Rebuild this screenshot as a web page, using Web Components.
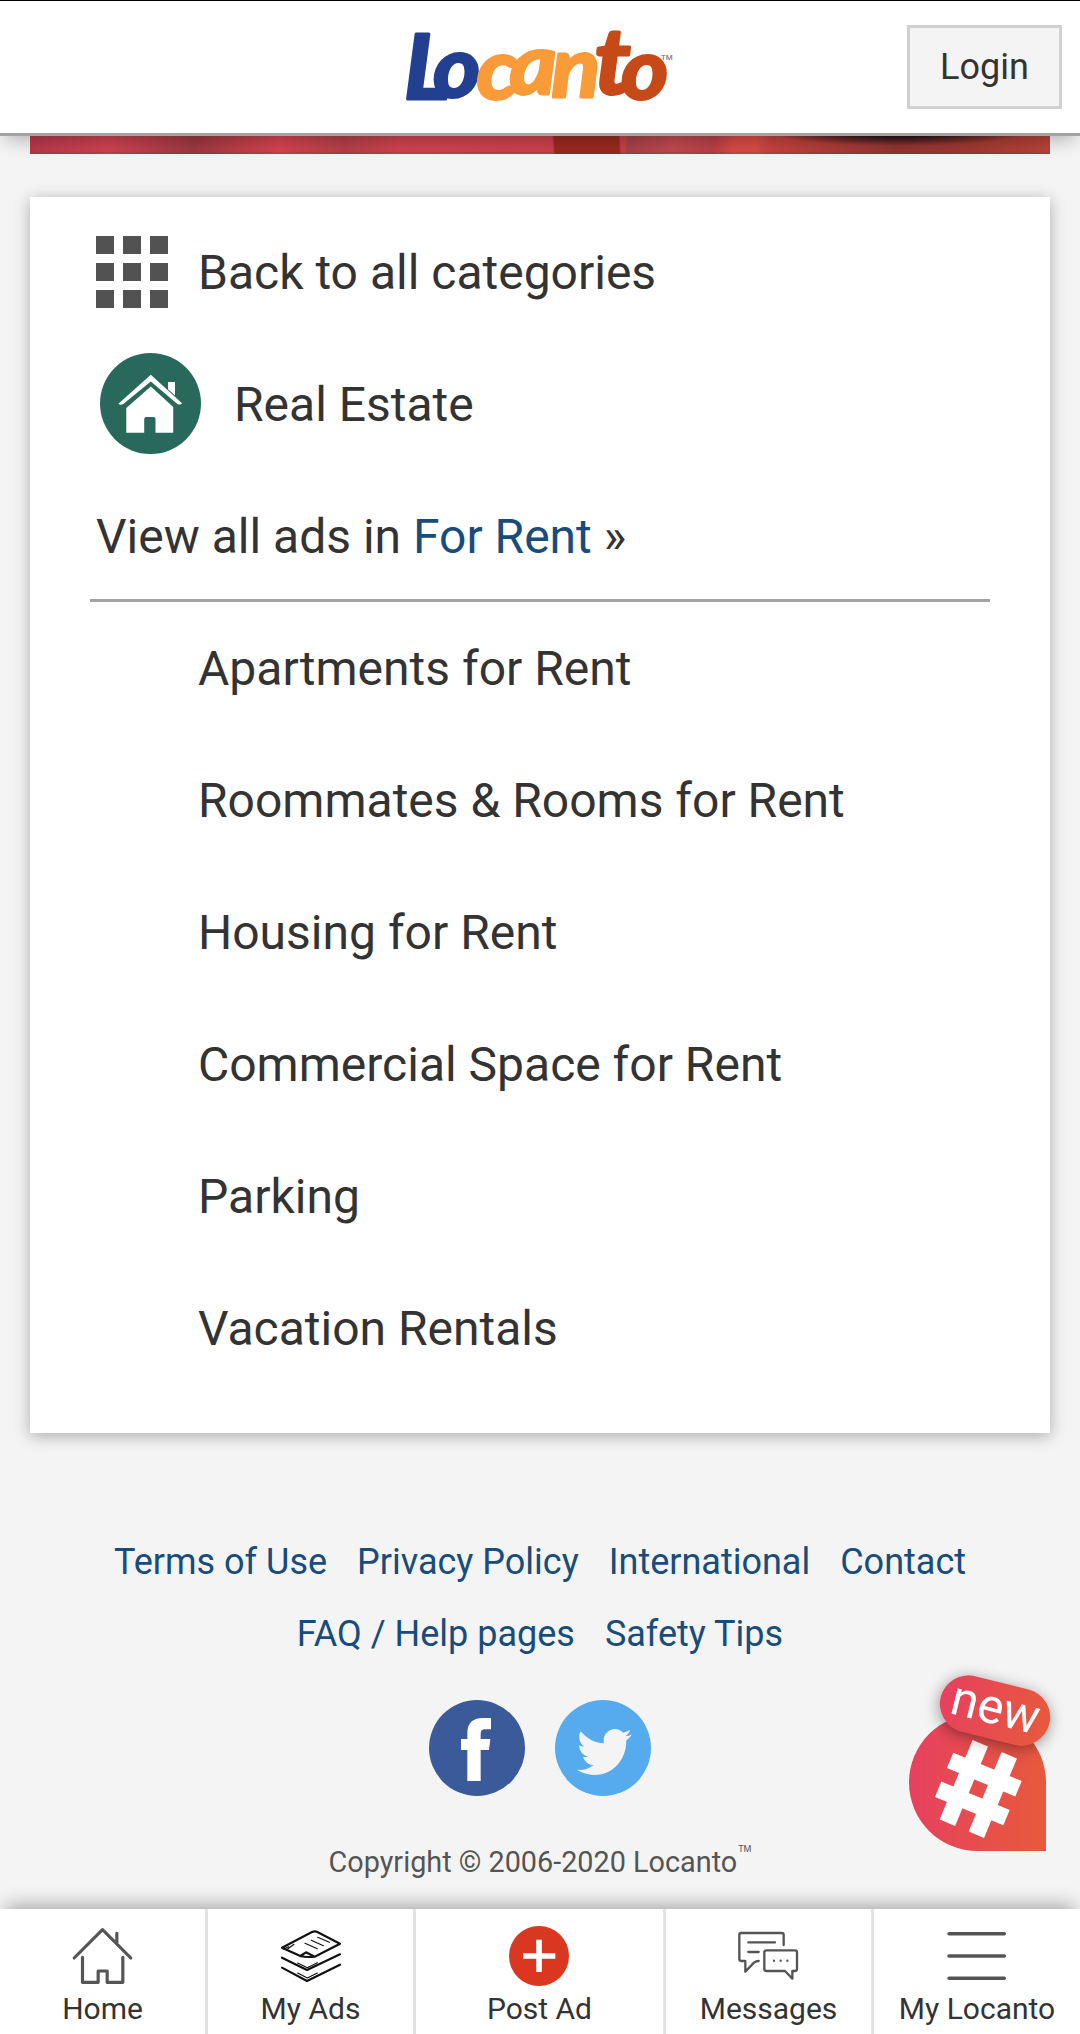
<!DOCTYPE html>
<html lang="en">
<head>
<meta charset="utf-8">
<title>Locanto - For Rent</title>
<style>
html,body{margin:0;padding:0;background:#f4f4f4}
body{font-family:Roboto,"Liberation Sans",sans-serif;color:#333}
</style>
</head>
<body>
<locanto-page></locanto-page>
<script>
const define=(name,css,html)=>customElements.define(name,class extends HTMLElement{
  constructor(){
    super();
    const t=document.createElement('template');
    t.innerHTML=`<style>*{box-sizing:border-box}${css}</style>${html}`;
    this.attachShadow({mode:'open'}).append(t.content.cloneNode(true));
  }
});

define('locanto-logo',`:host{display:block;width:270px;height:76px}svg{display:block;overflow:visible}
text{font-family:Lato,"Liberation Sans",sans-serif;font-weight:700;font-style:italic;font-size:84px;stroke-linejoin:round;stroke-width:3}
.b{fill:#22408f;stroke:#22408f}.y{fill:#f99b38;stroke:#f99b38}.r{fill:#c64a17;stroke:#c64a17}.L{font-size:90px}.t{font-size:92px}.tm{font:400 8px Roboto,sans-serif;fill:#666;stroke:none}`,
`<svg width="270" height="76" viewBox="405 28 270 76" role="img" aria-label="Locanto">
<text transform="translate(405 0) scale(1.07 1)"><tspan class="b L" x="-1" y="99">L</tspan><tspan class="b" x="26.500" y="97">o</tspan><tspan class="y" x="67 98 137" y="99.500 94 97.500">can</tspan><tspan class="r t" x="177" y="94.500">t</tspan><tspan class="r" x="202" y="99.500">o</tspan></text>
<text class="tm" x="661" y="60">TM</text></svg>`);

define('login-button',`:host{display:flex;width:155px;height:84px;border:3px solid #d0d0d0;background:#f4f4f4;align-items:center;justify-content:center;font-size:36px;line-height:42px;color:#333}`,`<slot></slot>`);

define('site-header',`:host{display:grid;grid-template-columns:1fr 270px 1fr;align-items:start;height:136px;flex:none;background:#fff;border-top:1px solid #000;border-bottom:3px solid #a3a1a1;box-shadow:0 9px 18px -6px rgba(0,0,0,.3);position:relative;z-index:2}
locanto-logo{margin-top:27px}login-button{justify-self:end;margin:24px 18px 0 0}`,
`<span></span><locanto-logo></locanto-logo><login-button><slot></slot></login-button>`);

define('hero-strip',`:host{display:block;flex:none;height:18px;margin:0 30px;background:
linear-gradient(#0000 82%,#602a4444),
radial-gradient(ellipse 125px 13px at 868px -3px,#2b1618 30%,#2b161800),
linear-gradient(97deg,#0000 592px,#a84048 594px,#c04a50 640px,#b84048 680px,#d84b46 700px 722px,#0000 735px),
linear-gradient(86deg,#0000 522px,#9c291f 524px 588px,#0000 590px),
linear-gradient(90deg,#b9384b 0,#cf4251 80px,#9f3841 165px,#d6444e 250px,#b53f49 315px,#d1434d 370px,#cc414c 525px,#c04448 590px,#d04642 715px,#b23c38 790px,#943531 865px,#a03832 940px,#b8443a 1020px)}`,``);

define('grid-icon',`:host{display:grid;grid-template-columns:repeat(3,18px);gap:9px;flex:none}i{height:18px;background:#525252}`,'<i></i>'.repeat(9));

define('estate-icon',`:host{display:block;flex:none;width:101px;height:101px}svg{display:block}`,
`<svg width="101" height="101" viewBox="0 0 101 101"><circle cx="50.5" cy="50.5" r="50.5" fill="#29695c"/>
<path fill="#fff" d="M50.8 21.8 82 50.3q-1 1.7-4.3 1L50.8 28.5 23 51.3q-3.300 1-4.600-.6ZM68 29h7v13.500l-7-6.300ZM50.800 33.500 73.200 54v25.700H55.500V66q0-2-2-2h-7.300q-2 0-2 2v13.700H26.300V55Z"/></svg>`);

define('category-row',`:host{display:flex;align-items:center;height:132px;padding-left:66px;gap:30px;font-size:48px;line-height:56px;white-space:pre}
span{padding-top:2px}
:host([sub]){padding-left:168px}
:host([estate]){padding:0 0 1px 69.500px;gap:33.500px}
:host([estate]) span{padding-top:3px}
:host([ruled]){gap:0;margin:0 60px;padding-left:6px;border-bottom:3px solid #a3a3a3;padding-top:3px}`,`<slot name="icon"></slot><span><slot></slot></span>`);

define('category-card',`:host{display:block;flex:none;height:1236px;margin:43px 30px 0;padding-top:9px;background:#fff;box-shadow:0 3px 15px rgba(0,0,0,.3)}a{color:#174c7c}`,
`<category-row><grid-icon slot="icon"></grid-icon>Back to all categories</category-row>
<category-row estate><estate-icon slot="icon"></estate-icon>Real Estate</category-row>
<category-row ruled>View all ads in <a>For Rent</a> »</category-row>
<category-row sub>Apartments for Rent</category-row>
<category-row sub>Roommates &amp; Rooms for Rent</category-row>
<category-row sub>Housing for Rent</category-row>
<category-row sub>Commercial Space for Rent</category-row>
<category-row sub>Parking</category-row>
<category-row sub>Vacation Rentals</category-row>`);

define('footer-links',`:host{display:flex;flex-direction:column;font-size:36px;line-height:72px;color:#174c7c}div{display:flex;justify-content:center;gap:30px}`,
`<div><a>Terms of Use</a><a>Privacy Policy</a><a>International</a><a>Contact</a></div><div><a>FAQ / Help pages</a><a>Safety Tips</a></div>`);

define('social-links',`:host{display:flex;justify-content:center;gap:30px;margin-top:30px}svg{display:block}`,
`<svg width="96" height="96" viewBox="327 60 288 288"><circle cx="471" cy="204" r="144" fill="#3b5a99"/><path fill="#fff" d="M442 303V210H423V177H442V160C442 129 458 114 488 114H513V148H495Q482 148 482 161V177H511L507 210H482V303Z"/></svg>
<svg width="96" height="96" viewBox="705 60 288 288"><circle cx="849" cy="204" r="144" fill="#56abef"/><path fill="#f4f4f4" transform="translate(771 131) scale(6.85 7.08)" d="M23.954 4.569c-.885.389-1.83.654-2.825.775 1.014-.611 1.794-1.574 2.163-2.723-.951.555-2.005.959-3.127 1.184-.896-.959-2.173-1.559-3.591-1.559-2.717 0-4.92 2.203-4.92 4.917 0 .39.045.765.127 1.124C7.691 8.094 4.066 6.13 1.64 3.161c-.427.722-.666 1.561-.666 2.475 0 1.71.87 3.213 2.188 4.096-.807-.026-1.566-.248-2.228-.616v.061c0 2.385 1.693 4.374 3.946 4.827-.413.111-.849.171-1.296.171-.314 0-.615-.03-.916-.086.631 1.953 2.445 3.377 4.604 3.417-1.68 1.319-3.809 2.105-6.102 2.105-.39 0-.779-.023-1.17-.067 2.189 1.394 4.768 2.209 7.557 2.209 9.054 0 13.999-7.496 13.999-13.986 0-.209 0-.42-.015-.63.961-.689 1.8-1.56 2.46-2.548z"/></svg>`);

define('site-footer',`:host{display:block;flex:1;padding-top:93px}
p{display:flex;justify-content:center;margin:48px 0 0;font-size:28.800px;line-height:36px;color:#555}small{font-size:9px;line-height:10px;padding-left:1px}`,
`<footer-links></footer-links><social-links></social-links><p><span>Copyright © 2006-2020 Locanto</span><small>TM</small></p>`);

define('hash-badge',`:host{display:block;position:absolute;right:34px;bottom:183px;width:137px;height:137px}
.drop{width:137px;height:137px;border-radius:50% 50% 0 50%;background:linear-gradient(90deg,#e6415f,#e8593c);overflow:hidden}
svg{display:block}
.pill{position:absolute;left:30px;top:-32px;width:112px;height:57px;border-radius:29px;transform:rotate(14deg);background:linear-gradient(90deg,#e6415f,#e8593c);box-shadow:0 3px 15px rgba(0,0,0,.4);color:#fff;font-size:49px;line-height:52px;text-align:center}`,
`<div class="drop"><svg width="137" height="137" viewBox="60 163 411 411"><g transform="translate(268 388) rotate(22.500)" stroke="#fff" stroke-width="50"><path d="M-47-129V129M47-129V129M-111-47H111M-111 47H111"/></g></svg></div><div class="pill">new</div>`);

define('nav-item',`:host{display:flex;flex-direction:column;align-items:center;padding-top:17px;font-size:30px;line-height:36px;white-space:nowrap}::slotted(svg){display:block;width:60px;height:60px;margin:0 1px 5px 0;overflow:visible}`,`<slot name="icon"></slot><slot></slot>`);

define('bottom-nav',`:host{display:grid;flex:none;grid-template-columns:205px 205px 247px 205px 206px;gap:3px;height:125px;background:linear-gradient(90deg,#fff 205px,#e3e3e3 205px 208px,#fff 208px 413px,#e3e3e3 413px 416px,#fff 416px 663px,#e3e3e3 663px 666px,#fff 666px 871px,#e3e3e3 871px 874px,#fff 874px);box-shadow:0 -9px 18px -6px rgba(0,0,0,.35);position:relative;z-index:2}
svg{fill:none;stroke:#555;stroke-width:9.5;stroke-linecap:round;stroke-linejoin:round}`,
`<nav-item><svg slot="icon" viewBox="217.5 108 180 180"><path d="M224 204 309 119 394 204M352 130V158M249 202V277H296V243H323V277H370V202"/></svg>Home</nav-item>
<nav-item><svg slot="icon" viewBox="840 108 180 180" style="stroke:#111;stroke-width:6.500"><path d="M846 173 936 126Q944 122 952 126L1020 161 944 200Q920 203 901 198ZM901 198 918 187 944 200M846 203 921 240 1020 193M846 233 921 273 1020 224"/><path stroke-width="3.500" d="M953 142 988 157M934 151 970 167M915 160 952 176M850 177 866 170M860 179 882 163M893 219 922 233 952 218M893 249 922 264 952 249"/></svg>My Ads</nav-item>
<nav-item><svg slot="icon" viewBox="327 108 180 180"><circle cx="417" cy="198" r="90" fill="#da3720" stroke="none"/><path stroke="#fff" stroke-width="17" stroke-linecap="butt" d="M369 198H466M417 149V246"/></svg>Post Ad</nav-item>
<nav-item><svg slot="icon" viewBox="174 108 180 180" style="stroke-width:7"><path d="M311 165V135Q311 129 305 129H184Q178 129 178 135V207Q178 213 184 213H196V245L222 218Q228 213 236 213M205 157H285M205 186H236"/><path d="M259 181H345Q351 181 351 187V237Q351 243 345 243H337V266L315 243H259Q253 243 253 237V187Q253 181 259 181Z"/><path d="M282 212h.1M302 212h.1M322 212h.1"/></svg>Messages</nav-item>
<nav-item><svg slot="icon" viewBox="801 108 180 180" style="stroke-width:10.500"><path d="M807 131H973M807 198H973M807 265H973"/></svg>My Locanto</nav-item>`);

define('locanto-page',`:host{display:flex;flex-direction:column;width:1080px;height:2034px;overflow:hidden;position:relative;background:#f4f4f4}`,
`<site-header>Login</site-header><hero-strip></hero-strip><category-card></category-card><site-footer></site-footer><hash-badge></hash-badge><bottom-nav></bottom-nav>`);
</script>
</body>
</html>
